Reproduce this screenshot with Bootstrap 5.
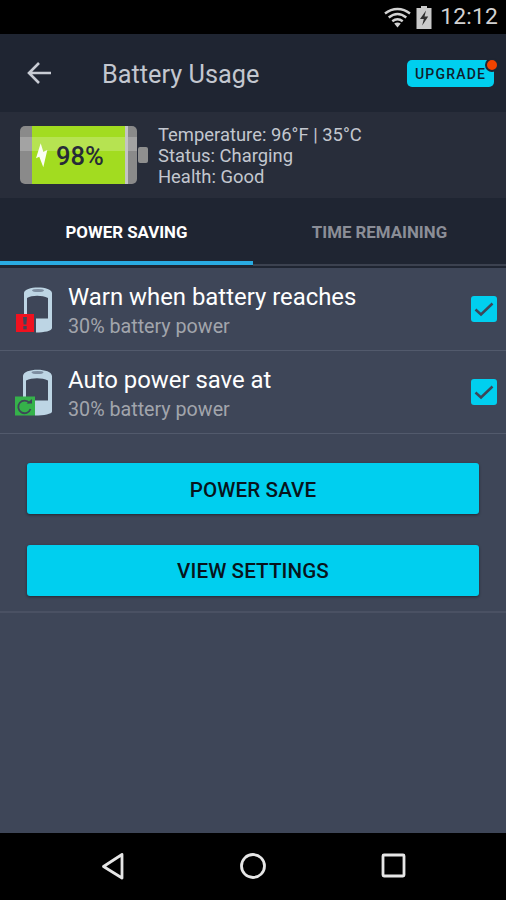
<!DOCTYPE html>
<html lang="en">
<head>
<meta charset="utf-8">
<title>Battery Usage</title>
<link href="https://cdn.jsdelivr.net/npm/bootstrap@5.3.0/dist/css/bootstrap.min.css" rel="stylesheet">
<style>
html,body{height:100%;margin:0;background:#3e4658;overflow:hidden}
body{font-family:Roboto,"Liberation Sans",sans-serif}
.phone{height:900px;width:506px}
.statusbar{height:34px;background:#000;padding-right:8px}
.status-time{font-size:22.8px;color:#d2d2d2;line-height:34px;margin-left:8px;letter-spacing:.2px}
.wifi{margin-right:5px}
.appbar{height:78px;background:#1f2532;padding-left:26px;padding-right:12px}
.appbar-title{font-size:25.3px;color:#c3c7cf;margin-left:50px;margin-top:4px;line-height:74px}
.upgrade{width:87px;height:27px;background:#00cfef;border-radius:5px;font-size:14px;font-weight:500;color:#10202c;letter-spacing:1.2px;line-height:27px;text-align:center;padding:0}
.upgrade-dot{position:absolute;top:-3px;right:-6px;width:14px;height:14px;border-radius:50%;background:#f24300;border:2px solid #1f2532}
.infobar{height:86px;background:#282d3a;padding-left:20px}
.info-text{font-size:18.4px;line-height:21.3px;color:#c3c7cf;margin-left:10px;margin-top:1px}
.tabs{height:70px;background:#1f2532}
.tab-item{width:50%;height:70px;font-size:16.85px;font-weight:700;text-align:center;padding-top:24px;line-height:20px}
.tab-on{color:#fff;background:linear-gradient(#1f2532 63px,#29abe2 63px,#29abe2 67px,#1f2532 67px)}
.tab-off{color:#8b8e97;background:linear-gradient(#1f2532 66px,#3c4250 66px,#3c4250 68px,#1f2532 68px)}
.opt-row{height:83px;border-bottom:1px solid #525a6c;padding-left:14px;padding-right:9px}
.opt-ico{width:40px;height:50px;margin-right:14px;flex:none}
.opt-text{padding-top:3px}
.opt-title{font-size:23.9px;line-height:28px;color:#fff}
.opt-sub{font-size:19.7px;line-height:24px;color:#a2a5ac;margin-top:4px}
.tick{width:26px;height:26px;flex:none}
.btn-area{padding:29px 27px 15px;border-bottom:2px solid #4a5163}
.cta{display:block;width:100%;height:51px;background:#00cfef;border:0;border-radius:3px;font-size:20.6px;font-weight:500;color:#08141c;box-shadow:0 1px 3px rgba(0,0,0,.45);padding:1px 0 0;letter-spacing:.1px}
.cta:hover{background:#00cfef;color:#08141c}
.cta-first{padding-top:3px}
.cta-gap{margin-top:31px}
.navbottom{height:67px;background:#000;flex:none}
</style>
</head>
<body>
<div class="phone d-flex flex-column">
  <div class="statusbar d-flex align-items-center justify-content-end flex-none">
    <svg class="wifi" width="27" height="21" viewBox="0 0 27 21"><g fill="none" stroke="#d2d2d2" stroke-width="2.400"><path d="M1 6.500C8.500 .5 18.500 .5 26 6.500"/><path d="M4.700 10.500C10.500 5.800 16.500 5.800 22.300 10.500"/><path d="M8.300 14.300c3.400-2.700 7-2.700 10.400 0"/></g><path d="M13.500 20.500l-3.300-4c2.100-1.200 4.500-1.200 6.600 0z" fill="#d2d2d2"/></svg>
    <svg width="16" height="23" viewBox="0 0 16 23"><path d="M5 0h6v2h4.500v21H.5V2H5z" fill="#c9c9c9"/><path d="M10 4.500L4 13h3.800L6.200 19.500l6-9H8.500z" fill="#2e2e2e"/></svg>
    <span class="status-time">12:12</span>
  </div>
  <div class="appbar d-flex align-items-center">
    <svg width="26" height="24" viewBox="0 0 26 24"><path d="M25 12H4M13 2L3 12l10 10" fill="none" stroke="#c8ccd4" stroke-width="2.600"/></svg>
    <span class="appbar-title flex-grow-1">Battery Usage</span>
    <button class="btn upgrade position-relative">UPGRADE<span class="upgrade-dot"></span></button>
  </div>
  <div class="infobar d-flex align-items-center">
    <svg width="128" height="58" viewBox="0 0 128 58">
      <rect x="0" y="0" width="117" height="58" rx="5" fill="#8a8a8a"/>
      <rect x="118" y="21" width="10" height="16" rx="2" fill="#8f8f8f"/>
      <rect x="12" y="0" width="93" height="58" fill="#a2dc20"/>
      <rect x="0" y="11" width="117" height="14" fill="#fff" opacity=".22"/>
      <rect x="105" y="0" width="3" height="58" fill="#c4c4c4"/>
      <path d="M20.700 17.300L16 32.300l3.300-1.600 4 10.600 4-17.300-4 1.700z" fill="#fff" opacity=".95"/>
      <text x="36" y="39" font-family="Roboto" font-size="25.500" font-weight="500" fill="#262a38">98%</text>
    </svg>
    <div class="info-text">
      <div>Temperature: 96°F | 35°C</div>
      <div>Status: Charging</div>
      <div>Health: Good</div>
    </div>
  </div>
  <div class="tabs d-flex">
    <div class="tab-item tab-on">POWER SAVING</div>
    <div class="tab-item tab-off">TIME REMAINING</div>
  </div>
  <div class="flex-grow-1">
    <div class="opt-row d-flex align-items-center">
      <svg class="opt-ico" viewBox="0 0 40 50">
        <path d="M10 9C10 1.500 38 1.500 38 9V44C38 47 30 48.500 22 48.500V34.500H34V14C28 11 18 11 13 14V30H10Z" fill="#bdd5e4"/>
        <ellipse cx="24" cy="6.500" rx="6" ry="1.600" fill="#7d8da0"/>
        <rect x="2" y="30" width="18" height="18" fill="#f0121f"/>
        <path d="M9 33h4l-.6 7.500H9.600z" fill="#3e4658"/><rect x="9.300" y="42" width="3.400" height="3.400" fill="#3e4658"/>
      </svg>
      <div class="opt-text flex-grow-1">
        <div class="opt-title">Warn when battery reaches</div>
        <div class="opt-sub">30% battery power</div>
      </div>
      <svg class="tick" viewBox="0 0 26 26"><rect width="26" height="26" rx="3" fill="#00cfef"/><path d="M4.500 13.500l5.500 5L21.500 7.500" fill="none" stroke="#3e4658" stroke-width="2.500"/></svg>
    </div>
    <div class="opt-row d-flex align-items-center">
      <svg class="opt-ico" viewBox="0 0 40 50">
        <path d="M9 9C9 .5 38 .5 38 9V44.500C38 47 30 48.500 21 48.500V33.500H34V13.500C28 10.500 18 10.500 12 13.500V30H9Z" fill="#bdd5e4"/>
        <ellipse cx="23.500" cy="5.500" rx="6" ry="1.600" fill="#7d8da0"/>
        <rect x="1" y="29.500" width="20" height="19" fill="#35b24a"/>
        <path d="M15.500 36A6.300 6.300 0 1 0 16.500 42" fill="none" stroke="#3e4658" stroke-width="1.800"/>
        <path d="M12.500 36.500h5.500v-4.500z" fill="#3e4658"/>
      </svg>
      <div class="opt-text flex-grow-1">
        <div class="opt-title">Auto power save at</div>
        <div class="opt-sub">30% battery power</div>
      </div>
      <svg class="tick" viewBox="0 0 26 26"><rect width="26" height="26" rx="3" fill="#00cfef"/><path d="M4.500 13.500l5.500 5L21.500 7.500" fill="none" stroke="#3e4658" stroke-width="2.500"/></svg>
    </div>
    <div class="btn-area">
      <button class="btn cta cta-first">POWER SAVE</button>
      <button class="btn cta cta-gap">VIEW SETTINGS</button>
    </div>
  </div>
  <div class="navbottom position-relative d-flex align-items-center justify-content-center">
    <svg width="506" height="67" viewBox="0 0 506 67" class="d-block">
      <g fill="none" stroke="#e6e6e6" stroke-width="2.800" stroke-linejoin="round">
        <path d="M122 21.500L103.500 33.500 122 45z"/>
        <circle cx="253" cy="33" r="11.500"/>
        <rect x="383" y="22" width="21" height="21" rx="1"/>
      </g>
    </svg>
  </div>
</div>
<script src="https://cdn.jsdelivr.net/npm/bootstrap@5.3.0/dist/js/bootstrap.bundle.min.js"></script>
</body>
</html>
